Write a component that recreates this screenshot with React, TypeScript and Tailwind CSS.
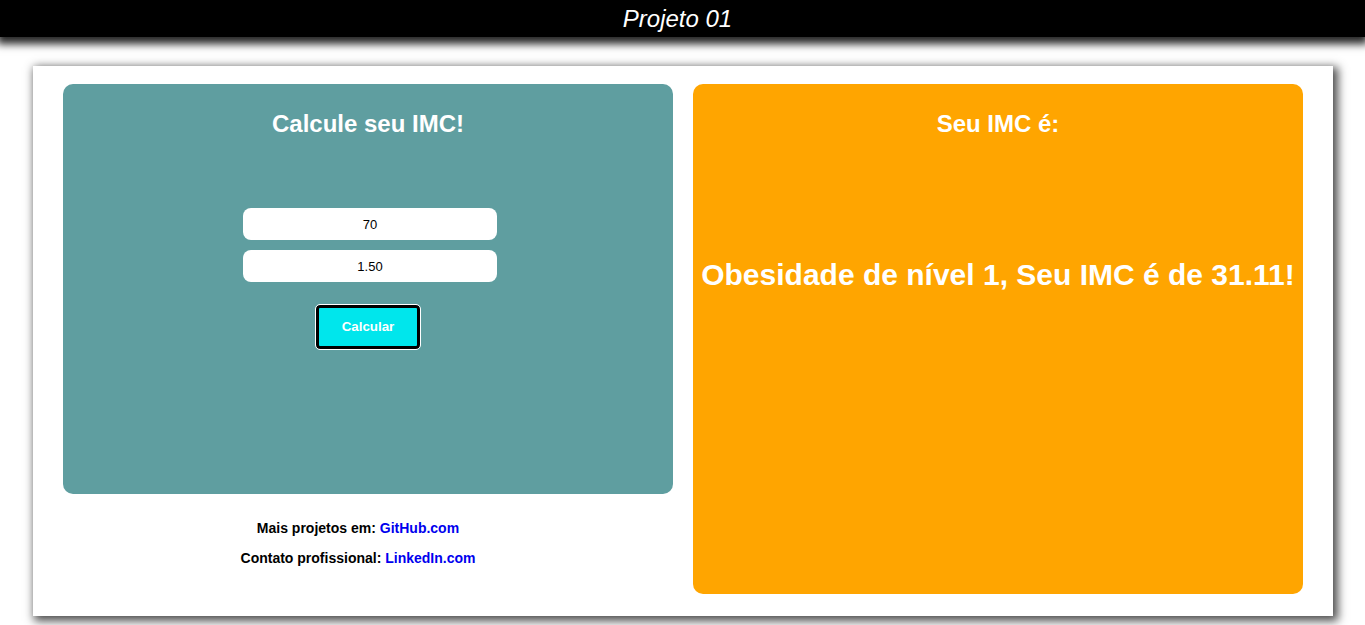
import React from "react";

export default function App() {
  return (
    <div className="min-h-[625px] bg-white font-['Liberation_Sans',Arial,sans-serif]">
      <header className="h-[37px] bg-black flex items-center justify-center shadow-[0_4px_8px_3px_rgba(0,0,0,0.85)] relative z-10">
        <h1 className="text-white italic text-[24px] leading-none mr-[10px]">Projeto 01</h1>
      </header>
      <div className="pt-[29px] px-[33px]">
        <main className="w-[1300px] h-[550px] bg-white shadow-[3px_3px_9px_2px_rgba(0,0,0,0.7)] pt-[18px] pl-[30px] pr-[30px] flex gap-[20px]">
          <div className="w-[610px] flex flex-col">
            <section className="h-[410px] bg-[#5F9EA0] rounded-[10px] flex flex-col items-center">
              <h2 className="text-white font-bold text-[24px] mt-[26px] leading-[28px]">Calcule seu IMC!</h2>
              <input
                readOnly
                value="70"
                className="mt-[70px] ml-[4px] w-[254px] h-[32px] rounded-[8px] bg-white text-center text-[13px] text-black outline-none"
              />
              <input
                readOnly
                value="1.50"
                className="mt-[10px] ml-[4px] w-[254px] h-[32px] rounded-[8px] bg-white text-center text-[13px] text-black outline-none"
              />
              <button className="mt-[23px] w-[104px] h-[44px] rounded-[4px] bg-[#00E6EC] border-[3px] border-black outline outline-1 outline-white text-white font-bold text-[13.33px]">
                Calcular
              </button>
            </section>
            <div className="mt-[26px] pr-[20px] flex flex-col items-center gap-[14px] text-[14px] font-bold text-black leading-[16px]">
              <p>
                Mais projetos em: <a className="text-[#0000EE]">GitHub.com</a>
              </p>
              <p>
                Contato profissional: <a className="text-[#0000EE]">LinkedIn.com</a>
              </p>
            </div>
          </div>
          <section className="w-[610px] h-[510px] bg-[#FFA500] rounded-[10px] flex flex-col items-center">
            <h2 className="text-white font-bold text-[24px] mt-[26px] leading-[28px]">Seu IMC é:</h2>
            <p className="text-white font-bold text-[30px] mt-[119px] leading-[35px] whitespace-nowrap">
              Obesidade de nível 1, Seu IMC é de 31.11!
            </p>
          </section>
        </main>
      </div>
    </div>
  );
}
